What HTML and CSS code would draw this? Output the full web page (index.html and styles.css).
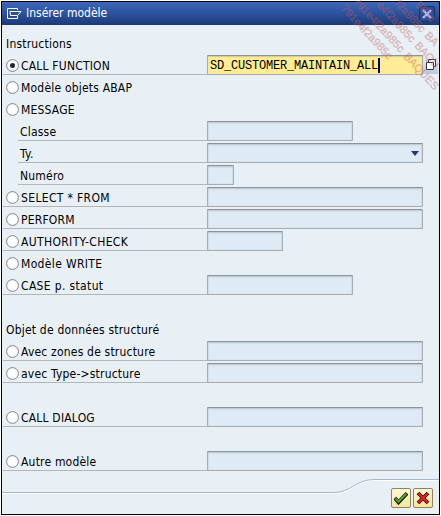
FILE: index.html
```html
<!DOCTYPE html>
<html lang="fr">
<head>
<meta charset="utf-8">
<title>Insérer modèle</title>
<link rel="stylesheet" href="styles.css">
</head>
<body>
<main class="dialog">
  <header class="titlebar">
    <svg class="title-icon" width="15" height="13" viewBox="0 0 15 13" fill="none" stroke="#fff"><path d="M10.500 3V1.500H.5v10h10V9M3 4.500h11l-3.500 4H3.500z"/></svg>
    <h1>Insérer modèle</h1>
    <button class="close" aria-label="Fermer"><svg width="10" height="10" viewBox="0 0 10 10"><path d="M1 1l8 8M9 1L1 9" stroke="#a9c0ff" stroke-width="2.400"/></svg></button>
  </header>
  <form class="form">
    <div class="row heading"><span>Instructions</span></div>
    <div class="row line"><label><i class="radio on"></i><span>CALL FUNCTION</span></label><div class="field full active"><span class="mono">SD_CUSTOMER_MAINTAIN_ALL</span><i class="caret"></i></div><button class="match" type="button" aria-label="Aide"><svg width="14" height="14" viewBox="0 0 14 14" fill="#fff" stroke="#333"><path d="M4.500 1.500h7v7h-7z"/><path d="M2.500 4.500h7v7h-7z"/></svg></button></div>
    <div class="row"><label><i class="radio"></i><span>Modèle objets ABAP</span></label></div>
    <div class="row"><label><i class="radio"></i><span>MESSAGE</span></label></div>
    <div class="row line sub"><label><span>Classe</span></label><div class="field mid"></div></div>
    <div class="row line sub"><label><span class="wide">Ty.</span></label><div class="field full select"><i class="arrow"></i></div></div>
    <div class="row line sub"><label><span>Numéro</span></label><div class="field tiny"></div></div>
    <div class="row line"><label><i class="radio"></i><span class="wide">SELECT * FROM</span></label><div class="field full"></div></div>
    <div class="row line"><label><i class="radio"></i><span>PERFORM</span></label><div class="field full"></div></div>
    <div class="row line"><label><i class="radio"></i><span class="wide">AUTHORITY-CHECK</span></label><div class="field small"></div></div>
    <div class="row"><label><i class="radio"></i><span class="wide">Modèle WRITE</span></label></div>
    <div class="row line"><label><i class="radio"></i><span class="wide">CASE p. statut</span></label><div class="field mid"></div></div>
    <div class="row"></div>
    <div class="row heading"><span>Objet de données structuré</span></div>
    <div class="row line"><label><i class="radio"></i><span>Avec zones de structure</span></label><div class="field full"></div></div>
    <div class="row line"><label><i class="radio"></i><span>avec Type-&gt;structure</span></label><div class="field full"></div></div>
    <div class="row"></div>
    <div class="row line"><label><i class="radio"></i><span>CALL DIALOG</span></label><div class="field full"></div></div>
    <div class="row"></div>
    <div class="row line"><label><i class="radio"></i><span>Autre modèle</span></label><div class="field full"></div></div>
  </form>
  <footer class="footer">
    <svg class="curve" width="437" height="36" viewBox="0 0 437 36" fill="none"><path d="M0 15.500H332C349 15.500 354 2.500 372 2.500H437" stroke="#fff"/><path d="M0 14.500H332C349 14.500 354 1.500 372 1.500H437" stroke="#a7b5cd"/></svg>
    <button class="btn" aria-label="Valider"><svg width="14" height="14" viewBox="0 0 14 14" fill="none"><path d="M.8 7l3.700 4.300L13 2.200" stroke="#111" stroke-width="3.800"/><path d="M1.500 7.500l3 3.300L12.300 2.800" stroke="#5aa820" stroke-width="2"/></svg></button>
    <button class="btn" aria-label="Annuler"><svg width="14" height="14" viewBox="0 0 14 14"><path d="M2 2l10 10M12 2L2 12" stroke="#3a0808" stroke-width="3.800"/><path d="M2.500 2.500l9 9M11.500 2.500l-9 9" stroke="#e32329" stroke-width="2.200"/></svg></button>
  </footer>
</main>
<svg class="watermark" width="441" height="110" viewBox="0 0 441 110" aria-hidden="true">
  <g text-anchor="end">
    <text transform="translate(388 60) rotate(47)">791e4f2a985c</text>
    <text transform="translate(400 53) rotate(47)">791e4f2a985c</text>
    <text transform="translate(411 43) rotate(47)">e4f2a985c</text>
    <text transform="translate(421 33) rotate(47)">f2a985c</text>
    <text transform="translate(431 23) rotate(47)">985c</text>
  </g>
  <g>
    <text transform="translate(403 57) rotate(47)">BAQUES</text>
    <text transform="translate(414 46) rotate(47)">BAQU</text>
    <text transform="translate(424 36) rotate(47)">BA</text>
  </g>
</svg>
</body>
</html>
```
FILE: styles.css
```css
* { box-sizing: border-box; }
body {
  margin: 0;
  width: 441px;
  height: 516px;
  overflow: hidden;
  background: #fff;
  padding: 1px;
  font: 12px/20px "DejaVu Sans Condensed", "DejaVu Sans", sans-serif;
  font-stretch: condensed;
  color: #000;
}
.dialog {
  width: 439px;
  height: 514px;
  border: 1px solid #000;
  background: #e8f0f6;
  display: flex;
  flex-direction: column;
}
.titlebar {
  height: 23px;
  display: flex;
  align-items: center;
  padding: 0 4px 0 5px;
  background: linear-gradient(#3e67b8, #2c529f 50%, #1c3975);
  color: #fff;
}
.titlebar h1 {
  margin: 0 auto 0 4px;
  font: inherit;
  line-height: 18px;
  padding-bottom: 2px;
}
button { padding: 0; margin: 0; display: flex; align-items: center; justify-content: center; }
.close {
  width: 16px;
  height: 16px;
  background: #2a4b92;
  border: 1px solid #1a3268;
  border-radius: 2px;
}
.form { padding-top: 8px; flex: none; }
.row { height: 22px; display: flex; align-items: flex-start; padding-left: 4px; }
.row.heading > span { padding-top: 1px; }
.row > span, .row label > span { white-space: nowrap; letter-spacing: .2px; }
.row label > span { padding-top: 2px; }
.row label > span.wide { letter-spacing: .35px; }
.row label {
  width: 201px;
  height: 20px;
  display: flex;
  align-items: center;
  gap: 2px;
}
.row.line { padding-left: 1px; }
.row.line label { width: 204px; padding-left: 3px; border-bottom: 1px solid #b3b6b9; }
.row.line label > span { padding-top: 3px; }
.row.line .radio { margin-top: 2px; }
.row.line.sub { padding-left: 16px; }
.row.line.sub label { width: 189px; padding-left: 2px; }
.radio {
  width: 13px;
  height: 13px;
  border: 1px solid #8d9093;
  border-radius: 50%;
  background: #fff;
  box-shadow: inset 0 0 1px #999;
  display: flex;
}
.radio.on::after {
  content: "";
  width: 5px;
  height: 5px;
  margin: auto;
  border-radius: 50%;
  background: #23233a;
}
.field {
  height: 20px;
  border: 1px solid #aaadb0;
  border-top-color: #8d9499;
  border-radius: 1px;
  background: #deebf5;
  box-shadow: inset 0 1px 2px #b8c4cf, inset 0 0 1px #b8c4cf;
  display: flex;
  align-items: center;
}
.full { width: 216px; }
.mid { width: 146px; }
.small { width: 76px; }
.tiny { width: 27px; }
.field.active {
  background: #ffec96;
  padding-left: 2px;
  box-shadow: inset 0 1px 1px #d5c98d;
}
.mono { font: 12px/18px "Liberation Mono", monospace; letter-spacing: -.2px; white-space: nowrap; padding-top: 1px; }
.caret { width: 2px; height: 15px; background: #00005f; }
.match { width: 15px; height: 19px; border: 0; background: linear-gradient(#e8f0f6, #b7cae4); }
.select { justify-content: flex-end; padding-right: 3px; }
.arrow { border: 4.5px solid transparent; border-top: 5px solid #203a72; border-bottom: 0; }
.footer {
  position: relative;
  margin-top: auto;
  height: 36px;
  display: flex;
  justify-content: flex-end;
  gap: 2px;
  padding: 10px 6px 0 0;
}
.curve { position: absolute; left: 0; top: 0; }
.btn {
  position: relative;
  width: 20px;
  height: 20px;
  border: 1px solid #8a8466;
  border-radius: 2px;
  background: linear-gradient(#fff8d5, #f8e59a);
}
.watermark { position: absolute; left: 0; top: 0; pointer-events: none; }
.watermark text {
  font: 11px "Liberation Sans", sans-serif;
  fill: #c45e5e;
  stroke: #c45e5e;
  stroke-width: .3px;
  opacity: .42;
}
```
